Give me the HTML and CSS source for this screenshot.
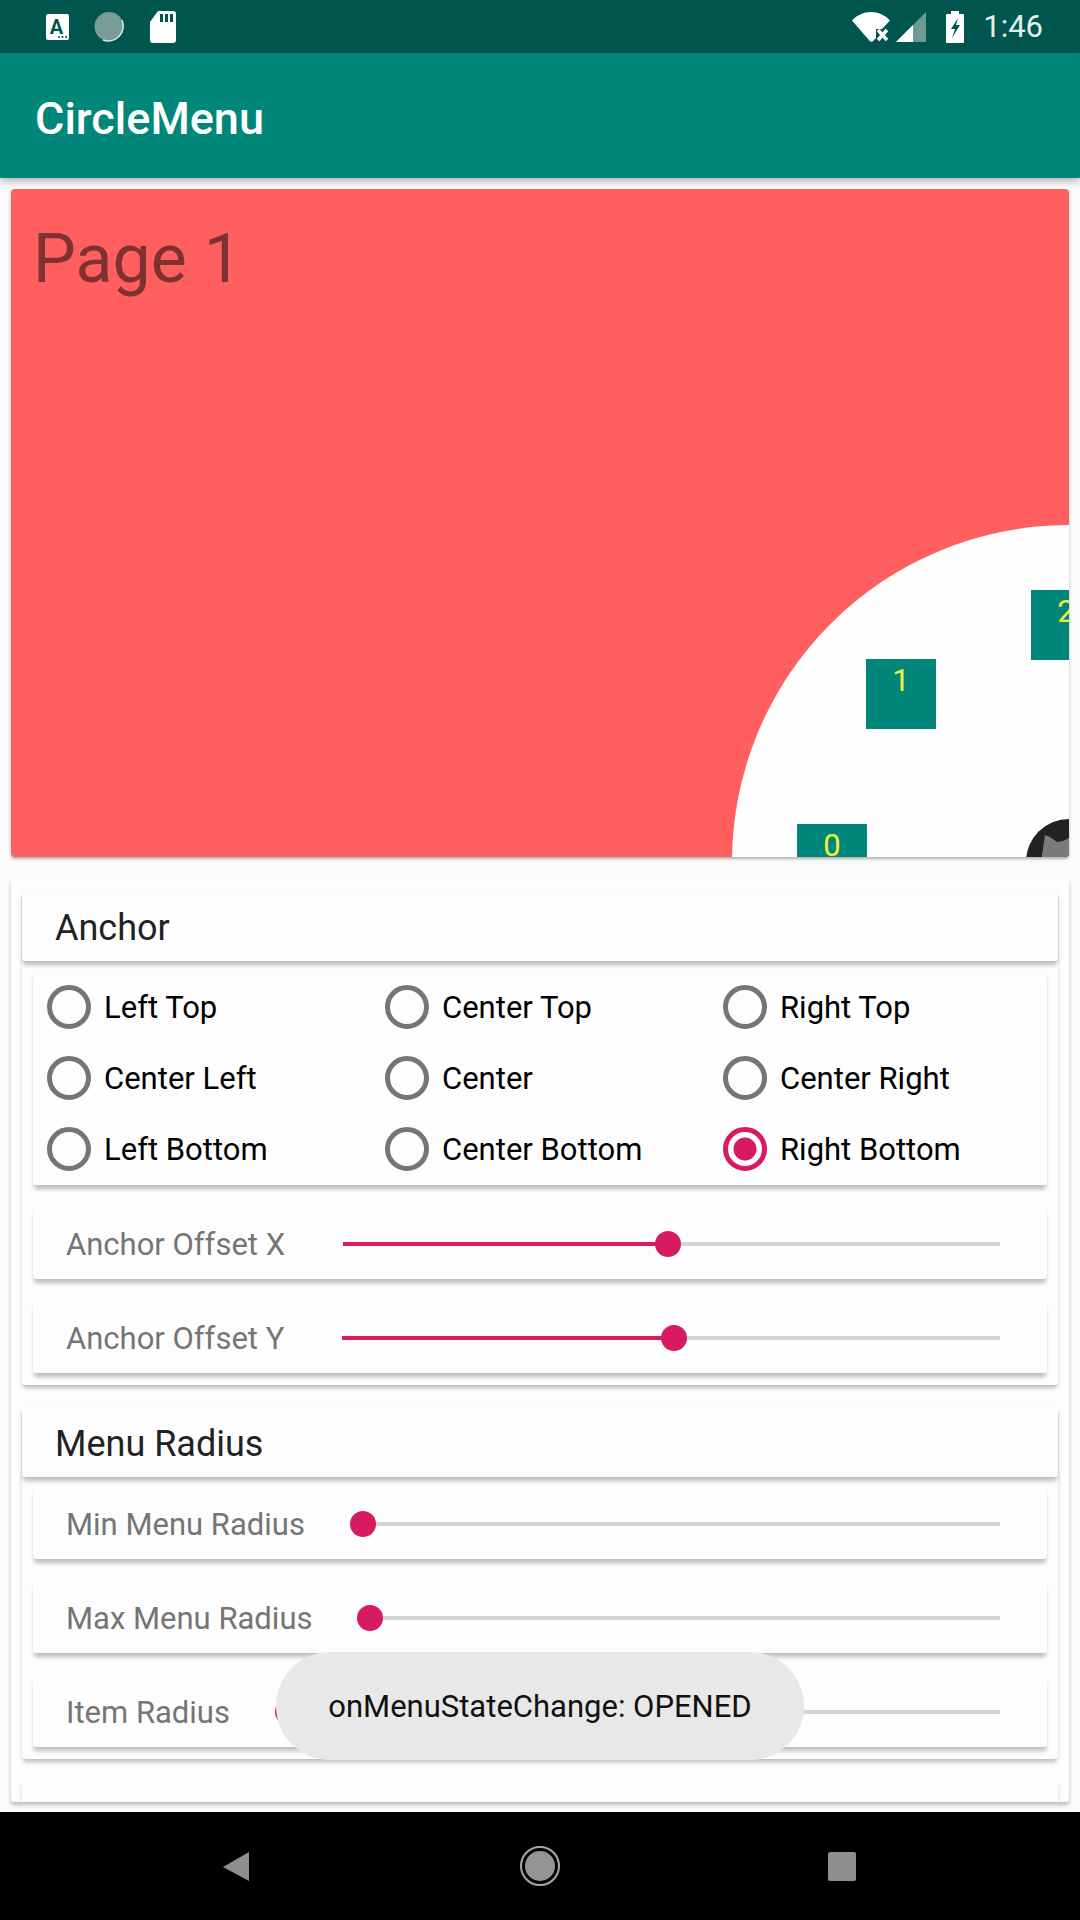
FILE: index.html
```html
<!DOCTYPE html>
<html lang="en">
<head>
  <meta charset="UTF-8">
  <meta name="viewport" content="width=device-width, initial-scale=1.0">
  <title>CircleMenu</title>
  <link rel="stylesheet" href="styles.css">
</head>
<body>
  <div class="status-bar">
    <div class="status-left">
      <svg class="icon-a" width="23" height="26" viewBox="0 0 23 26">
        <rect width="23" height="26" rx="2" fill="#fff"/>
        <text x="10.5" y="20" class="icon-a-letter">A</text>
        <circle cx="13" cy="23" r="1.1" fill="#00564f"/>
        <circle cx="16.5" cy="23" r="1.1" fill="#00564f"/>
        <circle cx="20" cy="23" r="1.1" fill="#00564f"/>
      </svg>
      <svg class="icon-spin" width="32" height="32" viewBox="0 0 32 32">
        <circle cx="15" cy="15.5" r="14.5" fill="#7a9b95"/>
        <path d="M28 9 A15 15 0 0 1 9 29" fill="none" stroke="#d5e5e2" stroke-width="1.6"/>
      </svg>
      <svg class="icon-sd" width="26" height="32" viewBox="0 0 26 32">
        <path d="M8 0H23a3 3 0 0 1 3 3V29a3 3 0 0 1-3 3H3a3 3 0 0 1-3-3V11Z" fill="#fff"/>
        <rect x="10" y="3" width="3" height="8" fill="#00564f"/>
        <rect x="15" y="3" width="3" height="8" fill="#00564f"/>
        <rect x="20" y="3" width="3" height="8" fill="#00564f"/>
      </svg>
    </div>
    <div class="status-right">
      <svg class="icon-wifi" width="38" height="30" viewBox="0 0 38 30">
        <path d="M0 8.5C5 3 12 0 19 0S33 3 38 8.5L30 17H24V26L20 30Q18 30 16 27Z" fill="#fff"/>
        <path d="M26 18l9 10M35 18l-9 10" stroke="#fff" stroke-width="3.4" fill="none"/>
      </svg>
      <svg class="icon-signal" width="30" height="30" viewBox="0 0 30 30">
        <path d="M0 30L30 0V30Z" fill="#6f9a93"/>
        <path d="M0 30L17 13V30Z" fill="#fff"/>
      </svg>
      <svg class="icon-battery" width="18" height="32" viewBox="0 0 18 32">
        <path d="M5 0H13V3H17a1 1 0 0 1 1 1V31a1 1 0 0 1-1 1H1a1 1 0 0 1-1-1V4a1 1 0 0 1 1-1H5Z" fill="#fff"/>
        <path d="M12 7L5 18H9L6 27L14 14H10Z" fill="#00564f"/>
      </svg>
      <span class="clock">1:46</span>
    </div>
  </div>

  <div class="toolbar">CircleMenu</div>

  <div class="main">
    <div class="page-card">
      <div class="page-title">Page 1</div>
      <div class="menu-circle"></div>
      <div class="menu-item item-0">0</div>
      <div class="menu-item item-1">1</div>
      <div class="menu-item item-2">2</div>
      <div class="menu-button">
        <svg width="86" height="86" viewBox="0 0 86 86">
          <path d="M16 86V36L19 16L24 18L31 23L37 22L43 19V86Z" fill="#7a7a7a"/>
        </svg>
      </div>
    </div>

    <div class="settings">
      <div class="group">
        <div class="group-title">Anchor</div>
        <div class="card radio-grid">
          <div class="radio"><span class="radio-mark"></span><span class="radio-label">Left Top</span></div>
          <div class="radio"><span class="radio-mark"></span><span class="radio-label">Center Top</span></div>
          <div class="radio"><span class="radio-mark"></span><span class="radio-label">Right Top</span></div>
          <div class="radio"><span class="radio-mark"></span><span class="radio-label">Center Left</span></div>
          <div class="radio"><span class="radio-mark"></span><span class="radio-label">Center</span></div>
          <div class="radio"><span class="radio-mark"></span><span class="radio-label">Center Right</span></div>
          <div class="radio"><span class="radio-mark"></span><span class="radio-label">Left Bottom</span></div>
          <div class="radio"><span class="radio-mark"></span><span class="radio-label">Center Bottom</span></div>
          <div class="radio checked"><span class="radio-mark"></span><span class="radio-label">Right Bottom</span></div>
        </div>
        <div class="card slider-row">
          <span class="slider-label">Anchor Offset X</span>
          <div class="track"><div class="fill" style="width: 49.5%"></div></div>
        </div>
        <div class="card slider-row">
          <span class="slider-label">Anchor Offset Y</span>
          <div class="track"><div class="fill" style="width: 50.4%"></div></div>
        </div>
      </div>

      <div class="group">
        <div class="group-title">Menu Radius</div>
        <div class="card slider-row">
          <span class="slider-label">Min Menu Radius</span>
          <div class="track"><div class="fill" style="width: 0%"></div></div>
        </div>
        <div class="card slider-row">
          <span class="slider-label">Max Menu Radius</span>
          <div class="track"><div class="fill" style="width: 0%"></div></div>
        </div>
        <div class="card slider-row">
          <span class="slider-label">Item Radius</span>
          <div class="track"><div class="fill" style="width: 0%"></div></div>
        </div>
      </div>

      <div class="group group-next"></div>
    </div>
  </div>

  <div class="nav-bar">
    <svg width="26" height="29" viewBox="0 0 26 29"><path d="M26 0V29L0 15Z" fill="#8f8f8f"/></svg>
    <div class="nav-home"><div class="nav-home-dot"></div></div>
    <div class="nav-recent"></div>
  </div>

  <div class="toast">onMenuStateChange: OPENED</div>
</body>
</html>
```

FILE: styles.css
```css
body {
  margin: 0;
  width: 1080px;
  height: 1920px;
  overflow: hidden;
  display: flex;
  flex-direction: column;
  font-family: Roboto, sans-serif;
  background: #fbfbfb;
  position: relative;
}

/* status bar */
.status-bar {
  height: 53px;
  flex: none;
  background: #00564f;
  display: flex;
  align-items: center;
  justify-content: space-between;
  padding: 0 37px 0 46px;
}
.status-left, .status-right {
  display: flex;
  align-items: center;
}
.status-left svg, .status-right svg {
  display: block;
  flex: none;
}
.icon-spin {
  margin-left: 25px;
}
.icon-sd {
  margin-left: 24px;
}
.icon-a-letter {
  font-family: Roboto, sans-serif;
  font-weight: 700;
  font-size: 20px;
  fill: #00564f;
  text-anchor: middle;
}
.icon-signal {
  margin-left: 6px;
}
.icon-battery {
  margin-left: 20px;
}
.clock {
  margin-left: 19px;
  color: #e4eeec;
  font-size: 31px;
}

.toolbar {
  height: 125px;
  flex: none;
  background: #00877a;
  color: #fff;
  font-size: 45px;
  font-weight: 500;
  line-height: 131px;
  padding-left: 35px;
  box-shadow: 0 3px 8px rgba(0, 0, 0, 0.3);
  position: relative;
  z-index: 1;
}

.main {
  flex: 1;
  min-height: 0;
  overflow: hidden;
  padding: 11px 11px 0;
}

/* red page with the open menu */
.page-card {
  height: 668px;
  background: #ff5f5f;
  border-radius: 4px;
  position: relative;
  overflow: hidden;
  box-shadow: 0 2px 3px rgba(0, 0, 0, 0.3);
}
.page-title {
  padding: 30px 0 0 22px;
  font-size: 68px;
  color: #7f3131;
}
.menu-circle {
  position: absolute;
  left: 721px;
  top: 336px;
  width: 674px;
  height: 674px;
  border-radius: 50%;
  background: #fefefe;
}
.menu-item {
  position: absolute;
  width: 70px;
  height: 70px;
  background: #00877a;
  color: #f0f040;
  font-size: 31px;
  text-align: center;
  line-height: 44px;
}
.item-0 {
  left: 786px;
  top: 635px;
}
.item-1 {
  left: 855px;
  top: 470px;
}
.item-2 {
  left: 1020px;
  top: 401px;
}
.menu-button {
  position: absolute;
  left: 1015px;
  top: 630px;
  width: 86px;
  height: 86px;
  border-radius: 50%;
  background: #222;
  overflow: hidden;
}

/* settings list */
.settings {
  margin-top: 22px;
  height: 923px;
  padding: 11px;
  box-sizing: border-box;
  background: #fdfdfd;
  border-radius: 3px;
  overflow: hidden;
  box-shadow: 0 3px 4px rgba(0, 0, 0, 0.25), 0 0 1px rgba(0, 0, 0, 0.12);
}
.group {
  padding-bottom: 12px;
  margin-bottom: 21px;
  background: #fdfdfd;
  border-radius: 3px;
  box-shadow: 0 4px 4px -1px rgba(0, 0, 0, 0.25), 0 0 1px rgba(0, 0, 0, 0.12);
}
.group-next {
  height: 200px;
}
.group-title {
  height: 71px;
  line-height: 77px;
  padding-left: 33px;
  font-size: 36px;
  color: #222;
  background: #fdfdfd;
  border-radius: 3px;
  box-shadow: 0 5px 4px -1px rgba(0, 0, 0, 0.25), 0 0 1px rgba(0, 0, 0, 0.1);
}
.card {
  margin: 23px 11px 0;
  background: #fdfdfd;
  border-radius: 3px;
  box-shadow: 0 5px 4px -1px rgba(0, 0, 0, 0.25), 0 0 1px rgba(0, 0, 0, 0.1);
}
.group-title + .card {
  margin-top: 11px;
}

.group-title + .radio-grid {
  margin-top: 10px;
}
.radio-grid {
  display: grid;
  grid-template-columns: repeat(3, 338px);
  grid-auto-rows: 71px;
  height: 214px;
  padding-left: 14px;
  box-sizing: border-box;
}
.radio {
  display: flex;
  align-items: center;
  gap: 13px;
  font-size: 31px;
  line-height: 38px;
  color: #000;
}
.radio-label {
  padding-top: 3px;
}
.radio-mark {
  width: 44px;
  height: 44px;
  box-sizing: border-box;
  border: 5px solid #757575;
  border-radius: 50%;
  flex: none;
}
.checked .radio-mark {
  border-color: #d81b60;
  background: radial-gradient(circle, #d81b60 11px, transparent 12px);
}

.slider-row {
  height: 71px;
  display: flex;
  align-items: center;
  padding: 0 47px 0 33px;
}
.slider-label {
  font-size: 31px;
  line-height: 38px;
  padding-top: 3px;
  color: #757575;
  margin-right: 58px;
  white-space: nowrap;
}
.track {
  flex: 1;
  height: 4px;
  background: #d4d4d4;
  position: relative;
}
.fill {
  height: 100%;
  background: #d81b60;
  position: relative;
}
.fill::after {
  content: "";
  position: absolute;
  right: -13px;
  top: -11px;
  width: 26px;
  height: 26px;
  border-radius: 50%;
  background: #d81b60;
}

.toast {
  position: absolute;
  left: 276px;
  top: 1652px;
  width: 528px;
  height: 108px;
  border-radius: 54px;
  background: #e8e8e8;
  color: #111;
  font-size: 31px;
  line-height: 110px;
  text-align: center;
  z-index: 2;
}

.nav-bar {
  height: 108px;
  flex: none;
  background: #000;
  display: grid;
  grid-template-columns: 472px 136px 468px;
  align-items: center;
  justify-items: center;
}
.nav-home {
  width: 40px;
  height: 40px;
  box-sizing: border-box;
  border: 2px solid #a8a8a8;
  border-radius: 50%;
  padding: 3px;
}
.nav-home-dot {
  width: 100%;
  height: 100%;
  border-radius: 50%;
  background: #959595;
}
.nav-recent {
  width: 28px;
  height: 29px;
  border-radius: 2px;
  background: #8f8f8f;
}
```
